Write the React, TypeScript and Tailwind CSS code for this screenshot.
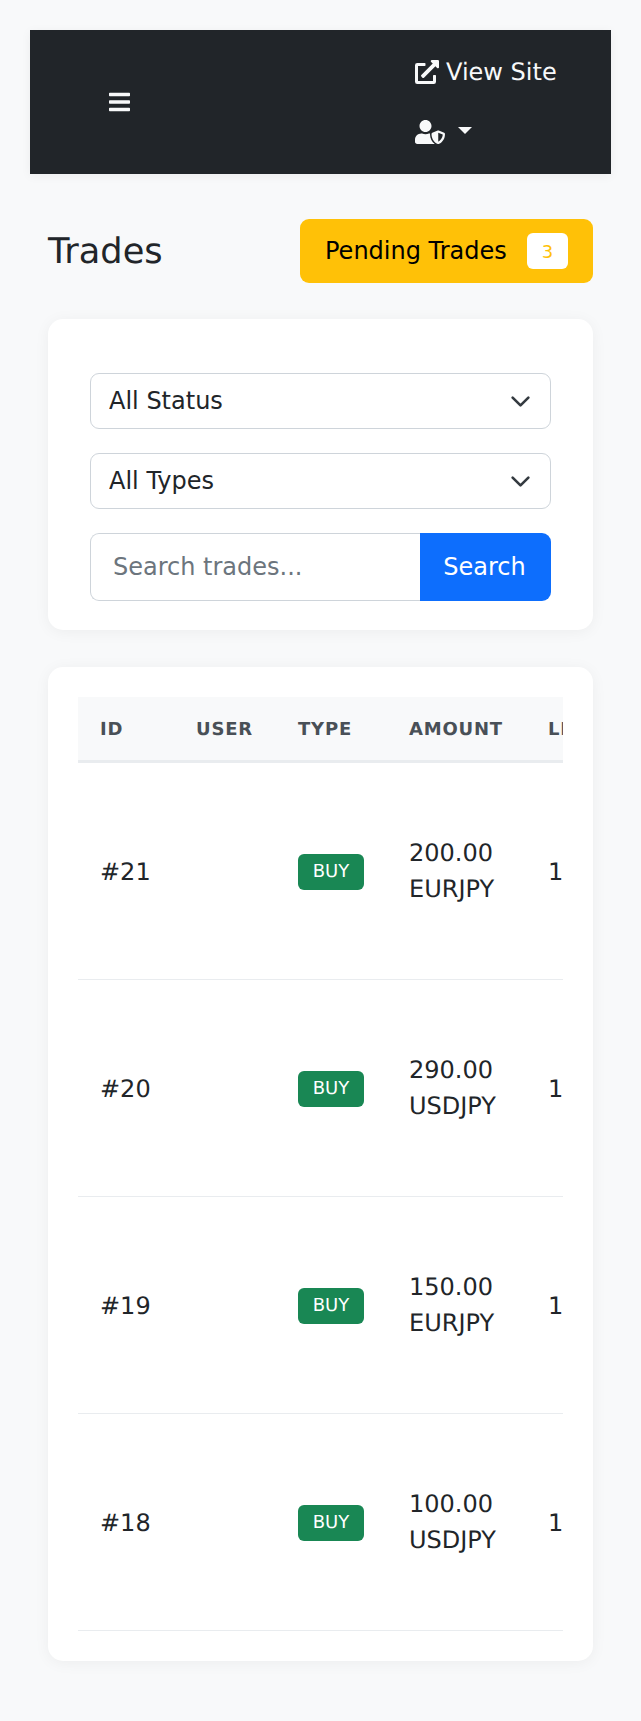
import { FaBars, FaUserShield, FaExternalLinkAlt } from "react-icons/fa";

const TRADES = [
  { id: 21, amount: "200.00", pair: "EURJPY" },
  { id: 20, amount: "290.00", pair: "USDJPY" },
  { id: 19, amount: "150.00", pair: "EURJPY" },
  { id: 18, amount: "100.00", pair: "USDJPY" },
];

function Dropdown({ label }: { label: string }) {
  return (
    <div className="relative">
      <select className="block h-[56px] w-full appearance-none rounded-[9px] border border-[#ced4da] bg-white pl-[18px] pr-[54px] text-[24px] leading-[36px] text-[#212529]">
        <option>{label}</option>
      </select>
      <svg
        viewBox="0 0 16 16"
        className="pointer-events-none absolute right-[20px] top-[18px] h-[21px] w-[21px]"
        fill="none"
        stroke="#343a40"
        strokeWidth="2"
        strokeLinecap="round"
        strokeLinejoin="round"
      >
        <path d="m2 5 6 6 6-6" />
      </svg>
    </div>
  );
}

export default function App() {
  return (
    <div className="min-h-screen bg-[#f8f9fa] p-[30px] font-['DejaVu_Sans',sans-serif] text-[#212529] [text-rendering:geometricPrecision]">
      <nav className="flex h-[144px] items-center bg-[#212529] pl-[79px] text-[#f8f9fa] shadow-[0_2px_10px_rgba(0,0,0,0.05)]">
        <FaBars className="h-[24px] w-[21px]" />
        <ul className="ml-[285px] flex flex-col gap-[24px]">
          <li className="flex h-[36px] items-center gap-[7px] text-[24px]">
            <FaExternalLinkAlt className="h-[24px] w-[24px]" />
            <span>View Site</span>
          </li>
          <li className="flex h-[36px] items-center">
            <FaUserShield className="h-[24px] w-[30px]" />
            <span className="ml-[13px] mt-[-4px] h-0 w-0 border-x-[7px] border-t-[7px] border-x-transparent border-t-[#f8f9fa]" />
          </li>
        </ul>
      </nav>

      <main className="px-[18px] pt-[45px]">
        <div className="mb-[36px] flex h-[64px] items-center justify-between">
          <h1 className="pt-[2px] text-[35.2px] font-normal leading-[42px]">Trades</h1>
          <button className="flex h-[64px] w-[293px] items-center justify-between rounded-[9px] bg-[#ffc107] pl-[25px] pr-[25px] text-[24px] text-black">
            <span>Pending Trades</span>
            <span className="flex h-[36px] w-[41px] items-center justify-center rounded-[6px] bg-white text-[18px] text-[#ffc107]">
              3
            </span>
          </button>
        </div>

        <section className="mb-[37px] rounded-[15px] bg-white px-[42px] pb-[29px] pt-[54px] shadow-[0_2px_15px_rgba(0,0,0,0.05)]">
          <div className="flex flex-col gap-[24px]">
            <Dropdown label="All Status" />
            <Dropdown label="All Types" />
            <div className="flex h-[68px]">
              <input
                placeholder="Search trades..."
                className="min-w-0 flex-1 rounded-l-[9px] border border-r-0 border-[#ced4da] bg-white pl-[22px] text-[24px] placeholder:text-[#6c757d]"
              />
              <button className="w-[131px] rounded-r-[9px] bg-[#0d6efd] pr-[2px] text-[24px] text-white">Search</button>
            </div>
          </div>
        </section>

        <section className="rounded-[15px] bg-white px-[30px] pb-[30px] pt-[30px] shadow-[0_2px_15px_rgba(0,0,0,0.05)]">
          <div className="overflow-hidden">
            <table className="w-[640px] table-fixed border-collapse text-left">
              <colgroup>
                <col className="w-[96px]" />
                <col className="w-[101px]" />
                <col className="w-[112px]" />
                <col className="w-[138px]" />
                <col className="w-[193px]" />
              </colgroup>
              <thead>
                <tr className="h-[64px] border-b-[3px] border-[#e9ecef] bg-[#f8f9fa] text-[18px] font-bold uppercase tracking-[0.8px] text-[#495057]">
                  <th className="pl-[22px] pt-[2px]">ID</th>
                  <th className="pl-[22px] pt-[2px]">User</th>
                  <th className="pl-[23px] pt-[2px]">Type</th>
                  <th className="pl-[22px] pt-[2px]">Amount</th>
                  <th className="pl-[23px] pt-[2px]">Leverage</th>
                </tr>
              </thead>
              <tbody className="text-[24px] leading-[36px]">
                {TRADES.map((t) => (
                  <tr key={t.id} className="h-[217px] border-b border-[#e9ecef] first:h-[218px]">
                    <td className="pl-[22px] pt-[2px]">#{t.id}</td>
                    <td className="pl-[22px]" />
                    <td className="pl-[23px] pt-[2px]">
                      <span className="block h-[36px] w-[66px] rounded-[6px] bg-[#198754] text-center text-[18px] text-white">
                        BUY
                      </span>
                    </td>
                    <td className="pl-[22px]">
                      {t.amount}
                      <br />
                      {t.pair}
                    </td>
                    <td className="pl-[23px] pt-[2px]">1:100</td>
                  </tr>
                ))}
              </tbody>
            </table>
          </div>
        </section>
      </main>
    </div>
  );
}
